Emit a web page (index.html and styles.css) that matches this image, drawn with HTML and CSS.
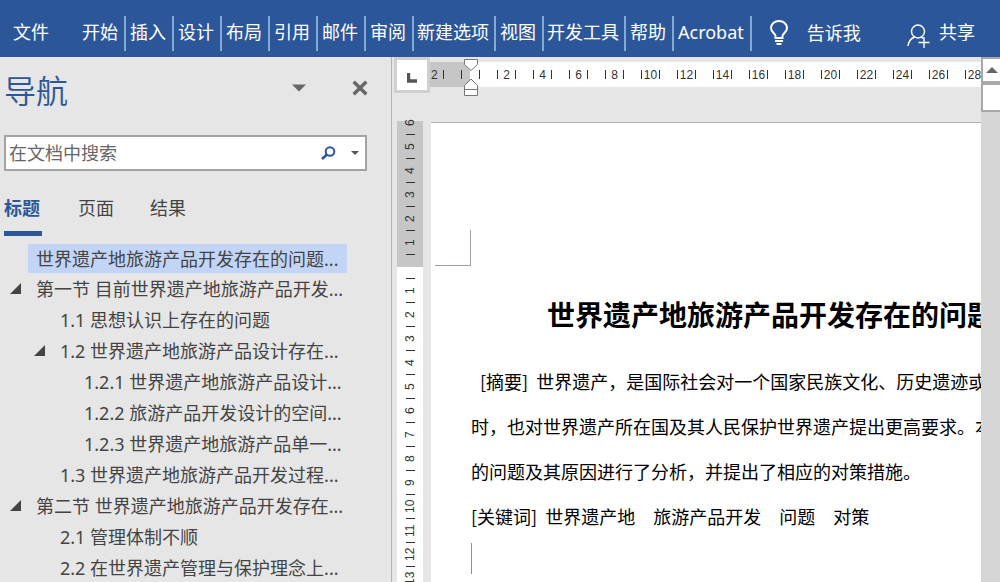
FILE: index.html
```html
<!DOCTYPE html>
<html lang="zh-CN">
<head>
<meta charset="utf-8">
<title>世界遗产地旅游产品开发存在的问题</title>
<link rel="stylesheet" href="styles.css">
</head>
<body>
<div class="app">
  <header class="ribbon">
    <button class="file" type="button">文件</button>
    <nav class="tabs">
      <button class="tab" type="button">开始</button>
      <button class="tab" type="button">插入</button>
      <button class="tab" type="button">设计</button>
      <button class="tab" type="button">布局</button>
      <button class="tab" type="button">引用</button>
      <button class="tab" type="button">邮件</button>
      <button class="tab" type="button">审阅</button>
      <button class="tab wide" type="button">新建选项</button>
      <button class="tab" type="button">视图</button>
      <button class="tab wide" type="button">开发工具</button>
      <button class="tab" type="button">帮助</button>
      <button class="tab" type="button">Acrobat</button>
    </nav>
    <button class="tell" type="button">
      <svg width="18" height="26" viewBox="0 0 18 26" fill="none" stroke="#fff" stroke-width="2" aria-hidden="true"><path d="M5.5 18V16C5.5 13.500 1 12.500 1 8C1 4 4.500 1 9 1S17 4 17 8C17 12.500 12.500 13.500 12.500 16V18Z"/><path d="M5 21H13M6.500 24H11.500"/></svg>
      <span>告诉我</span>
    </button>
    <button class="share" type="button">
      <svg width="24" height="24" viewBox="0 0 24 24" fill="none" stroke="#fff" stroke-width="1.400" aria-hidden="true"><circle cx="11" cy="7.500" r="6.500"/><path d="M1 22C1.500 17.500 4 14.500 7.500 13M14 13L16 14.500M17 13V24M11.500 18.500H22.500"/></svg>
      <span>共享</span>
    </button>
  </header>

  <main class="work">
    <aside class="pane">
      <div class="pane-head">
        <h2>导航</h2>
        <button type="button" class="plain" aria-label="任务窗格选项"><svg width="14" height="8" viewBox="0 0 14 8" aria-hidden="true"><path d="M0 0.500H14L7 7.500Z" fill="#666"/></svg></button>
        <button type="button" class="plain" aria-label="关闭"><svg width="16" height="16" viewBox="0 0 14 14" aria-hidden="true"><path d="M1.500 1.500L12.500 12.500M12.500 1.500L1.500 12.500" stroke="#666" stroke-width="3"/></svg></button>
      </div>
      <form class="search">
        <input type="text" placeholder="在文档中搜索" aria-label="在文档中搜索">
        <button type="button" class="plain" aria-label="搜索"><svg width="15" height="14" viewBox="0 0 15 14" fill="none" stroke="#2b579a" aria-hidden="true"><circle cx="9" cy="5.500" r="4.300" stroke-width="2"/><path d="M6 8.500L1 13" stroke-width="2.600"/></svg></button>
        <button type="button" class="plain" aria-label="搜索选项"><svg width="8" height="4" viewBox="0 0 8 4" aria-hidden="true"><path d="M0 0H8L4 4Z" fill="#555"/></svg></button>
      </form>
      <div class="views">
        <button type="button" class="view on">标题</button>
        <button type="button" class="view">页面</button>
        <button type="button" class="view">结果</button>
      </div>
      <ul class="tree">
        <li class="l1 selected"><a href="#t">世界遗产地旅游产品开发存在的问题...</a></li>
        <li class="l1 open"><a href="#t">第一节 目前世界遗产地旅游产品开发...</a></li>
        <li class="l2"><a href="#t">1.1 思想认识上存在的问题</a></li>
        <li class="l2 open"><a href="#t">1.2 世界遗产地旅游产品设计存在...</a></li>
        <li class="l3"><a href="#t">1.2.1 世界遗产地旅游产品设计...</a></li>
        <li class="l3"><a href="#t">1.2.2 旅游产品开发设计的空间...</a></li>
        <li class="l3"><a href="#t">1.2.3 世界遗产地旅游产品单一...</a></li>
        <li class="l2"><a href="#t">1.3 世界遗产地旅游产品开发过程...</a></li>
        <li class="l1 open"><a href="#t">第二节 世界遗产地旅游产品开发存在...</a></li>
        <li class="l2"><a href="#t">2.1 管理体制不顺</a></li>
        <li class="l2"><a href="#t">2.2 在世界遗产管理与保护理念上...</a></li>
      </ul>
    </aside>

    <section class="editor">
      <div class="top">
        <button type="button" class="corner" aria-label="制表符"><svg width="10" height="10" viewBox="0 0 10 10" aria-hidden="true"><path d="M1.500 0V8H10" fill="none" stroke="#555" stroke-width="3.400"/></svg></button>
        <div class="hruler">
          <div class="margin"><span>2</span><i></i><i></i></div>
          <i class="first"></i>
          <div class="cell"><i></i><span>2</span><i></i></div>
          <div class="cell"><i></i><span>4</span><i></i></div>
          <div class="cell"><i></i><span>6</span><i></i></div>
          <div class="cell"><i></i><span>8</span><i></i></div>
          <div class="cell"><i></i><span>10</span><i></i></div>
          <div class="cell"><i></i><span>12</span><i></i></div>
          <div class="cell"><i></i><span>14</span><i></i></div>
          <div class="cell"><i></i><span>16</span><i></i></div>
          <div class="cell"><i></i><span>18</span><i></i></div>
          <div class="cell"><i></i><span>20</span><i></i></div>
          <div class="cell"><i></i><span>22</span><i></i></div>
          <div class="cell"><i></i><span>24</span><i></i></div>
          <div class="cell"><i></i><span>26</span><i></i></div>
          <div class="cell"><i></i><span>28</span><i></i></div>
        </div>
        <svg class="indent" width="14" height="37" viewBox="0 0 14 37" fill="#fff" stroke="#777" aria-hidden="true"><path d="M.5.500H13.500V5.500L7 11.500L.5 5.500Z"/><path d="M7 20L13.500 26.500V36.500H.5V26.500ZM.5 30.500H13.500"/></svg>
      </div>
      <div class="body">
        <div class="vruler">
          <div><span>6</span></div><div><span>5</span></div><div><span>4</span></div><div><span>3</span></div><div><span>2</span></div><div><span>1</span></div><div><span></span></div>
          <div><span>1</span></div><div><span>2</span></div><div><span>3</span></div><div><span>4</span></div><div><span>5</span></div><div><span>6</span></div><div><span>7</span></div><div><span>8</span></div><div><span>9</span></div><div><span>10</span></div><div><span>11</span></div><div><span>12</span></div><div><span>13</span></div>
        </div>
        <article class="page" id="t">
          <div class="crop"></div>
          <h1>世界遗产地旅游产品开发存在的问题</h1>
          <p class="lead">[摘要]&nbsp; 世界遗产，是国际社会对一个国家民族文化、历史遗迹或</p>
          <p>时，也对世界遗产所在国及其人民保护世界遗产提出更高要求。本</p>
          <p>的问题及其原因进行了分析，并提出了相应的对策措施。</p>
          <p>[关键词]&nbsp; 世界遗产地　旅游产品开发　问题　对策</p>
          <div class="caret"></div>
        </article>
      </div>
    </section>

    <div class="scroll">
      <button type="button" class="up" aria-label="向上滚动"><svg width="12" height="6" viewBox="0 0 12 6" aria-hidden="true"><path d="M0 6H12L6 0Z" fill="#666"/></svg></button>
      <div class="thumb"></div>
    </div>
  </main>
</div>
</body>
</html>
```
FILE: styles.css
```css
* { box-sizing: border-box; }
body {
  margin: 0;
  font: 18px/24px "Noto Sans", "Noto Sans CJK SC", sans-serif;
  color: #444;
  background: #e6e6e6;
}
button, input { font: inherit; color: inherit; border: 0; padding: 0; background: none; }
button { display: block; white-space: nowrap; }
svg { display: block; }
.app { display: flex; flex-direction: column; height: 100vh; overflow: hidden; }

.ribbon {
  display: flex;
  align-items: center;
  flex: none;
  height: 57px;
  padding: 10px 25px 0 13px;
  background: #2b579a;
  color: #fff;
}
.file { margin-right: 29px; padding-bottom: 3px; }
.tabs { display: flex; }
.tab { height: 35px; padding: 0 6px 3px 4px; border-right: 2px solid #83aad2; }
.wide { padding: 0 5px 3px 3px; }
.tell { display: flex; align-items: center; gap: 19px; margin-left: 18px; padding-bottom: 2px; }
.share { display: flex; align-items: center; gap: 8px; margin-left: auto; padding-bottom: 3px; }
.share svg { margin-top: 8px; }

.work { display: flex; flex: 1; min-height: 0; }
.pane { flex: none; width: 392px; border-right: 1px solid #b4b4b4; overflow: hidden; }
.pane-head { display: flex; align-items: center; padding: 0 23px 0 4px; height: 62px; }
.pane-head h2 {
  margin: 0 auto 0 0;
  padding-top: 6px;
  font-size: 32px;
  line-height: 48px;
  font-weight: 350;
  color: #2b579a;
}
.pane-head button + button { margin-left: 46px; }
.search {
  display: flex;
  align-items: center;
  height: 36px;
  margin: 16px 24px 0 4px;
  padding: 0 6px 0 3px;
  border: 2px solid #a3a3a3;
  background: #fff;
}
.search input { flex: 1; min-width: 0; height: 30px; outline: 0; }
.search input::placeholder { color: #666; opacity: 1; }
.search button + button { margin-left: 15px; }
.views { display: flex; gap: 36px; margin: 25px 0 8px 4px; }
.view { height: 40px; padding-bottom: 11px; border-bottom: 5px solid transparent; }
.on { color: #2b579a; font-weight: 700; border-color: #2b579a; padding-right: 2px; }
.tree { margin: 0; padding: 0; list-style: none; }
.tree li { display: flex; align-items: center; height: 31px; }
.tree a { color: inherit; text-decoration: none; white-space: nowrap; }
.l1 { padding-left: 36px; }
.l2 { padding-left: 60px; }
.l3 { padding-left: 84px; }
.selected { margin: 0 44px 0 28px; background: #c2d5f7; }
.tree .selected { padding-left: 8px; height: 29px; }
.open::before {
  content: "";
  width: 11px;
  height: 11px;
  margin: 0 15px 0 -26px;
  background: #444;
  clip-path: polygon(100% 0, 100% 100%, 0 100%);
}

.editor { flex: 1; min-width: 0; display: flex; flex-direction: column; font-family: "Noto Sans CJK SC", sans-serif; }
.top { position: relative; display: flex; flex: none; padding-left: 2px; }
.corner {
  display: grid;
  place-items: center;
  flex: none;
  width: 36px;
  height: 36px;
  border: 3px solid #d0d0d0;
  background: #fff;
}
.corner svg { margin-top: 6px; }
.hruler {
  display: flex;
  align-items: center;
  flex: 1;
  min-width: 0;
  height: 25px;
  margin-top: 5px;
  overflow: hidden;
  background: #fff;
  font: 12px/16px "Liberation Sans", sans-serif;
  color: #333;
}
.hruler i { flex: none; width: 1px; height: 9px; background: #333; }
.margin { display: flex; align-items: center; flex: none; width: 40px; height: 25px; padding-left: 1px; background: #c6c6c6; }
.margin span { width: 12px; }
.margin i + i { margin-left: 17px; }
.hruler .first { margin: 0 17px 0 9px; }
.cell { display: flex; align-items: center; flex: none; width: 36px; }
.cell span { width: 17px; display: flex; justify-content: center; }
.indent { position: absolute; left: 72px; top: 2px; }

.body { flex: 1; min-height: 0; display: flex; padding-left: 5px; overflow: hidden; }
.vruler {
  flex: none;
  width: 26px;
  margin: 18px 8px 0 0;
  background: linear-gradient(transparent 10px, #c6c6c6 10px 156px, #fff 156px);
  font: 12px/16px "Liberation Sans", sans-serif;
  color: #333;
}
.vruler div { display: flex; flex-direction: column; align-items: center; height: 24px; }
.vruler div::after { content: ""; width: 9px; height: 1px; background: #333; }
.vruler span { height: 23px; writing-mode: vertical-rl; transform: rotate(180deg); text-align: center; }
.page {
  flex: 1;
  min-width: 0;
  margin-top: 29px;
  padding-left: 40px;
  overflow: hidden;
  background: #fff;
  border-top: 1px solid #b0b0b0;
  color: #000;
  white-space: nowrap;
}
.crop { width: 36px; height: 36px; margin: 107px 0 0 -36px; border: solid #9aa59a; border-width: 0 1px 1px 0; }
.page h1 { margin: 27px 0 24px 76px; font-size: 28px; line-height: 42px; }
.page p { margin: 0; line-height: 45px; }
.page .lead { padding-left: 9px; }
.caret { width: 1px; height: 31px; margin-top: 4px; background: #8a958a; }

.scroll { flex: none; width: 19px; background: #d6d6d6; }
.up, .thumb { width: 100%; background: #fff; border: 2px solid #a8a8a8; border-right: 0; }
.up { display: grid; place-items: center; height: 26px; }
.thumb { height: 29px; }
```
